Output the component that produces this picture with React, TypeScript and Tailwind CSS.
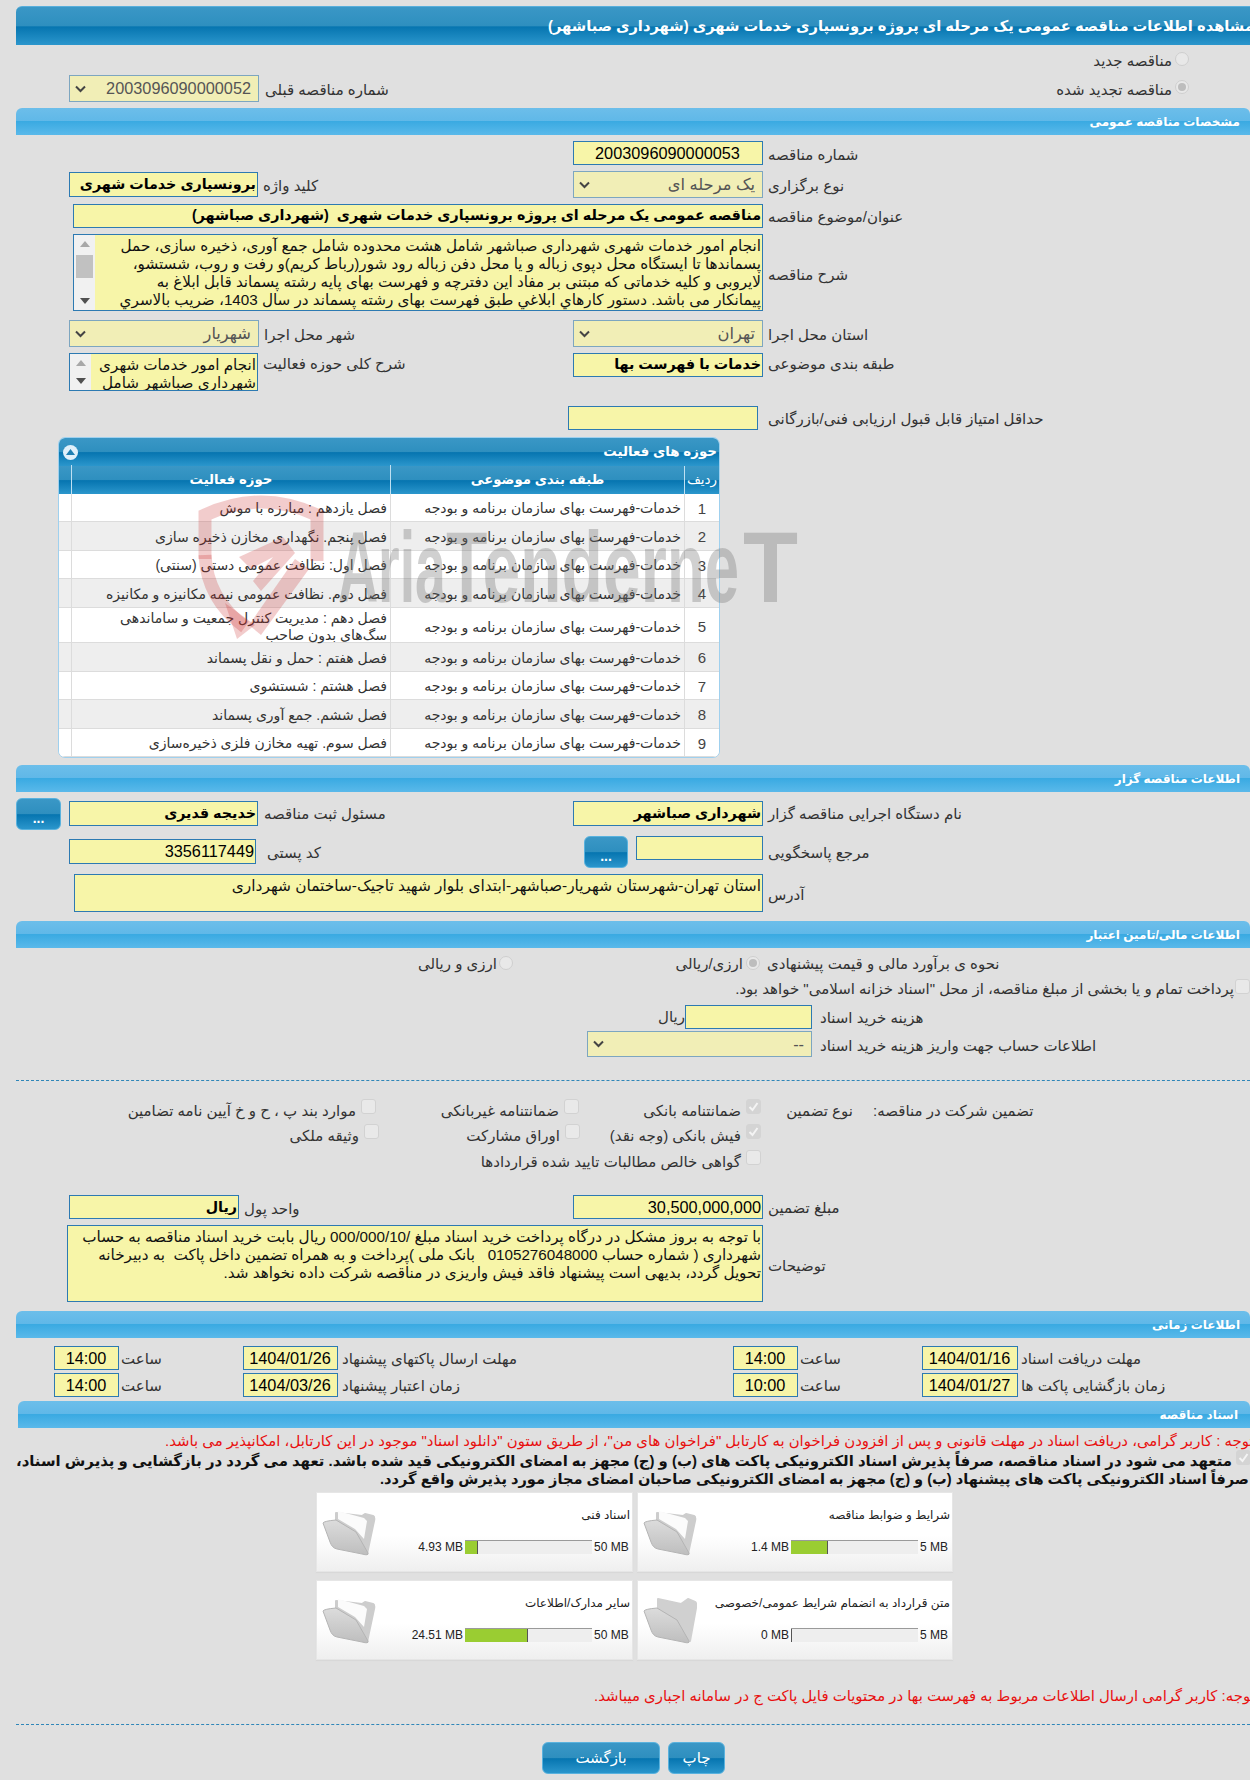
import React from "react";

const titleBg = "bg-[linear-gradient(to_bottom,#3a97c6_0%,#2e8fbf_50%,#0675b0_52%,#2b96cc_100%)]";
const sectionBg = "bg-[linear-gradient(to_bottom,#6cbeea_0%,#60b8e8_48%,#3aaae2_50%,#5ab9ea_100%)]";

function Fa({ children, className = "" }: { children: React.ReactNode; className?: string }) {
  return <span dir="rtl" className={"whitespace-pre " + className}>{children}</span>;
}

function Label({ children, className = "" }: { children: React.ReactNode; className?: string }) {
  return <div dir="rtl" className={"whitespace-nowrap text-[15px] leading-[18px] text-[#333] text-left " + className}>{children}</div>;
}

function Box({ children, className = "", align = "justify-end", bold = false }: { children?: React.ReactNode; className?: string; align?: string; bold?: boolean }) {
  return (
    <div className={"flex items-center shrink-0 bg-[#f7f5a8] border border-[#2d7ab2] pr-[1px] overflow-hidden text-black " + align + " " + className}>
      {bold ? <Fa className="font-bold text-[14.3px]">{children}</Fa> : <Fa className="text-[16.3px]">{children}</Fa>}
    </div>
  );
}

function Sel({ children, className = "" }: { children: React.ReactNode; className?: string }) {
  return (
    <div className={"flex items-center justify-between h-[27px] shrink-0 bg-[#f1eeb6] border border-[#7da6c0] pl-[5px] pr-[7px] text-[#555] " + className}>
      <svg width="11" height="8" viewBox="0 0 11 8" className="shrink-0"><path d="M1 1.5 5.5 6 10 1.5" fill="none" stroke="#444" strokeWidth="2" /></svg>
      <Fa className="text-[16.3px]">{children}</Fa>
    </div>
  );
}

function Section({ children, className = "" }: { children: React.ReactNode; className?: string }) {
  return (
    <div className={"flex items-center justify-end h-[27px] rounded-t-[6px] pr-[10px] " + sectionBg + " " + className}>
      <Fa className="text-white font-bold text-[12px] leading-[27px] pt-[2px]">{children}</Fa>
    </div>
  );
}

function Radio({ checked = false, className = "" }: { checked?: boolean; className?: string }) {
  return (
    <span className={"flex items-center justify-center w-[14px] h-[14px] rounded-full bg-[#e8e8e8] border border-[#cfcfcf] shrink-0 " + className}>
      {checked && <span className="block w-[8px] h-[8px] rounded-full bg-[#bdbdbd]" />}
    </span>
  );
}

function Check({ checked = false, className = "" }: { checked?: boolean; className?: string }) {
  return (
    <span className={"flex items-center justify-center w-[15px] h-[15px] rounded-[3px] border shrink-0 " + (checked ? "bg-[#d4d4d4] border-[#d4d4d4] " : "bg-[#e9e9e9] border-[#d2d2d2] ") + className}>
      {checked && <svg width="11" height="11" viewBox="0 0 11 11"><path d="M1.5 6 4.5 9 9.5 2" fill="none" stroke="#f4f4f4" strokeWidth="2" /></svg>}
    </span>
  );
}

function Scroll({ thumb = false, className = "" }: { thumb?: boolean; className?: string }) {
  return (
    <div className={"flex flex-col items-center justify-between shrink-0 w-[21px] bg-[#f1f1f1] py-[6px] " + className}>
      <svg width="10" height="6" viewBox="0 0 10 6"><path d="M5 0 10 6H0z" fill="#a8a8a8" /></svg>
      {thumb && <div className="w-[17px] h-[23px] bg-[#c1c1c1] -mt-[2px] mb-[10px]" />}
      <svg width="10" height="6" viewBox="0 0 10 6"><path d="M0 0H10L5 6z" fill="#505050" /></svg>
    </div>
  );
}

function Lines({ lines, className = "" }: { lines: string[]; className?: string }) {
  return (
    <div dir="rtl" className={"flex-1 overflow-hidden text-[15.2px] leading-[18px] text-[#111] pr-[1px] pt-[2px] " + className}>
      {lines.map((l, i) => (
        <div key={i} className="whitespace-pre">{l}</div>
      ))}
    </div>
  );
}

function Btn({ children, className = "", small = false }: { children: React.ReactNode; className?: string; small?: boolean }) {
  return (
    <div className={"flex items-center justify-center shrink-0 rounded-[6px] border border-[#59b2de] text-white " + titleBg + " " + className}>
      {small ? <span className="font-bold text-[14px] mt-[8px]">{children}</span> : <Fa className="text-[15px]">{children}</Fa>}
    </div>
  );
}

const rowsData: { n: string; text: React.ReactNode; h: string }[] = [
  { n: "1", text: "فصل یازدهم : مبارزه با موش", h: "h-[28px]" },
  { n: "2", text: "فصل پنجم. نگهداری مخازن ذخیره سازی", h: "h-[29px]" },
  { n: "3", text: "فصل اول: نظافت عمومی دستی (سنتی)", h: "h-[28px]" },
  { n: "4", text: "فصل دوم. نظافت عمومی نیمه مکانیزه و مکانیزه", h: "h-[29px]" },
  { n: "5", text: <>فصل دهم : مدیریت کنترل جمعیت و ساماندهی<br />سگ‌های بدون صاحب</>, h: "h-[35px]" },
  { n: "6", text: "فصل هفتم : حمل و نقل پسماند", h: "h-[29px]" },
  { n: "7", text: "فصل هشتم : شستشوی", h: "h-[28px]" },
  { n: "8", text: "فصل ششم. جمع آوری پسماند", h: "h-[29px]" },
  { n: "9", text: "فصل سوم. تهیه مخازن فلزی ذخیره‌سازی", h: "h-[28px]" },
];

const colsGrid = "grid grid-cols-[12px_319px_294px_1fr]";

function Watermark() {
  const t = { fontFamily: "Liberation Sans", fontWeight: 700, fontSize: 100, fill: "#6f6f6f", fillOpacity: 0.33, lengthAdjust: "spacingAndGlyphs" as const };
  return (
    <svg className="absolute left-[131px] top-[52px] pointer-events-none" width="680" height="190" viewBox="190 490 680 190">
      <g fill="none" stroke="#c92a2a" strokeOpacity="0.24" strokeWidth="13">
        <path d="M206 560V516Q262 490 318 516V562" />
        <path d="M206 556Q208 600 246 628" />
      </g>
      <g fill="#c92a2a" fillOpacity="0.24">
        <path d="M238 640 226 604 256 626Z" />
        <path d="M240 558 284 538 296 554 262 592 254 582 274 558 252 570Z" />
        <path d="M296 560 310 570 262 636 250 626Z" />
      </g>
      <text x="339" y="603" {...t} textLength="108">Aria</text>
      <text x="447" y="603" {...t} textLength="221">Tender</text>
      <text x="668" y="603" {...t} textLength="72">ne</text>
      <text x="744" y="603" {...t} textLength="55">T</text>
    </svg>
  );
}

function Folder({ open = true }: { open?: boolean }) {
  const id = open ? "fo" : "fc";
  return (
    <svg width="56" height="50" viewBox="8 16 56 50" className="shrink-0 mt-[14px] ml-[3px] blur-[0.4px]">
      <defs>
        <linearGradient id={id} x1="0" y1="0" x2="0" y2="1">
          <stop offset="0" stopColor="#dcdcdc" />
          <stop offset="1" stopColor="#bebebe" />
        </linearGradient>
      </defs>
      {open ? (
        <>
          <path d="M24 22 50 25 53 23 61 25Q63 26 62 30L55 63 24 34Z" fill="#cdcdcd" stroke="#cdcdcd" strokeWidth="2" strokeLinejoin="round" />
          <path d="M26 20 52 27 55 30 52 48 43 38 26 28Z" fill="#fbfbfb" />
        </>
      ) : (
        <path d="M25 20 48 25 55 20 62 23Q64 24 63 29L57 62 25 36Z" fill="#d0d0d0" stroke="#d0d0d0" strokeWidth="2" strokeLinejoin="round" />
      )}
      <path d="M11 32Q12 30 24 29L44 41 56 62Q57 65 50 63L25 58Q20 57 18 51Z" fill={"url(#" + id + ")"} stroke="#b4b4b4" strokeWidth="1" strokeLinejoin="round" />
    </svg>
  );
}

function Card({ title, size, max, fill, open = true, w, last = false }: { title: string; size: string; max: string; fill: number; open?: boolean; w: string; last?: boolean }) {
  return (
    <div className={"flex h-[80px] border border-[#e6e6e6] bg-[linear-gradient(to_bottom,#ffffff_0%,#ffffff_55%,#efefef_100%)] shadow-[0_1px_1px_#d8d8d8] " + w}>
      <Folder open={open} />
      <div className="flex-1 flex flex-col items-end pr-[2px] pt-[13px]">
        <Fa className="text-[12px] leading-[18px] text-[#222]">{title}</Fa>
        <div className="flex items-center mt-[16px] text-[12px] leading-[14px] text-[#222]">
          <span className="mr-[2px]">{size}</span>
          <div className="w-[127px] h-[14px] bg-[#eeeeee] border-t border-t-[#9a9a9a]">
            <div className="h-[13px] bg-[#9acd32] border-r border-r-[#555]" style={{ width: fill }} />
          </div>
          <span className={"ml-[2px] " + (last ? "w-[30px]" : "w-[36px]")}>{max}</span>
        </div>
      </div>
    </div>
  );
}

export default function App() {
  return (
    <div className="w-[1250px] h-[1780px] overflow-hidden bg-[#e0e0e0] [font-family:'Liberation_Sans','DejaVu_Sans',sans-serif]">
      <div className="pl-[16px] pt-[6px] w-[1250px]">
        {/* Title */}
        <div className={"flex items-center h-[39px] w-[1300px] rounded-tl-[6px] pl-[532px] border-t border-[#58aedb] " + titleBg}>
          <Fa className="font-bold text-white text-[14.7px]">مشاهده اطلاعات مناقصه عمومی یک مرحله ای پروژه برونسپاری خدمات شهری (شهرداری صباشهر)</Fa>
        </div>

        {/* Radios */}
        <div className="flex mt-[7px] h-[14px] pl-[1039px]">
          <Label className="w-[117px] text-right">مناقصه جدید</Label>
          <Radio className="ml-[3px]" />
        </div>
        <div className="flex mt-[9px] h-[27px] pl-[53px]">
          <Sel className="w-[190px] justify-between">2003096090000052</Sel>
          <Label className="ml-[6px] mt-[6px] w-[790px]">شماره مناقصه قبلی</Label>
          <Label className="w-[117px] text-right mt-[6px]">مناقصه تجدید شده</Label>
          <Radio checked className="ml-[3px] mt-[5px]" />
        </div>

        <Section className="mt-[6px]">مشخصات مناقصه عمومی</Section>

        {/* Row: number */}
        <div className="flex items-center mt-[6px] pl-[557px]">
          <Box className="w-[190px] h-[24px]" align="justify-center">2003096090000053</Box>
          <Label className="ml-[5px] mt-[3px]">شماره مناقصه</Label>
        </div>

        {/* Row: type & keyword */}
        <div className="grid grid-cols-[557px_1fr] mt-[6px]">
          <div className="flex items-center pl-[53px]">
            <Box bold className="w-[189px] h-[25px]">برونسپاری خدمات شهری</Box>
            <Label className="ml-[5px] mt-[2px]">کلید واژه</Label>
          </div>
          <div className="flex items-center">
            <Sel className="w-[190px]">یک مرحله ای</Sel>
            <Label className="ml-[5px] mt-[3px]">نوع برگزاری</Label>
          </div>
        </div>

        {/* Title row */}
        <div className="flex items-center mt-[6px] pl-[57px]">
          <Box bold className="w-[690px] h-[24px]">مناقصه عمومی یک مرحله ای پروژه برونسپاری خدمات شهری  (شهرداری صباشهر)</Box>
          <Label className="ml-[5px] mt-[2px]">عنوان/موضوع مناقصه</Label>
        </div>

        {/* Description */}
        <div className="flex items-center mt-[6px] pl-[57px]">
          <div className="flex w-[690px] h-[77px] shrink-0 bg-[#f7f5a8] border border-[#2d7ab2]">
            <Scroll thumb />
            <Lines
              lines={[
                "انجام امور خدمات شهری شهرداری صباشهر شامل هشت محدوده شامل جمع آوری، ذخیره سازی، حمل",
                "پسماندها تا ایستگاه محل دپوی زباله و یا محل دفن زباله رود شور(رباط کریم)و رفت و روب، شستشو،",
                "لایروبی و کلیه خدماتی که مبتنی بر مفاد این دفترچه و فهرست بهای پایه رشته پسماند قابل ابلاغ به",
                "پیمانکار می باشد. دستور کارهاي ابلاغي طبق فهرست بهای رشته پسماند در سال 1403، ضریب بالاسري",
              ]}
            />
          </div>
          <Label className="ml-[5px] mt-[4px]">شرح مناقصه</Label>
        </div>

        {/* Province/city */}
        <div className="grid grid-cols-[557px_1fr] mt-[9px]">
          <div className="flex items-center pl-[53px]">
            <Sel className="w-[190px]">شهریار</Sel>
            <Label className="ml-[5px] mt-[3px]">شهر محل اجرا</Label>
          </div>
          <div className="flex items-center">
            <Sel className="w-[190px]">تهران</Sel>
            <Label className="ml-[5px] mt-[2px]">استان محل اجرا</Label>
          </div>
        </div>

        {/* Activity / category */}
        <div className="grid grid-cols-[557px_1fr] mt-[6px]">
          <div className="flex items-start pl-[53px]">
            <div className="flex w-[189px] h-[38px] shrink-0 bg-[#f7f5a8] border border-[#2d7ab2]">
              <Scroll />
              <Lines className="overflow-hidden" lines={["انجام امور خدمات شهری", "شهرداری صباشهر شامل"]} />
            </div>
            <Label className="ml-[5px] mt-[2px]">شرح کلی حوزه فعالیت</Label>
          </div>
          <div className="flex items-start">
            <Box bold className="w-[190px] h-[24px]">خدمات با فهرست بها</Box>
            <Label className="ml-[5px] mt-[2px]">طبقه بندی موضوعی</Label>
          </div>
        </div>

        {/* Score */}
        <div className="flex items-center mt-[15px] pl-[552px]">
          <Box className="w-[190px] h-[24px]" />
          <Label className="ml-[10px] mt-[2px]">حداقل امتیاز قابل قبول ارزیابی فنی/بازرگانی</Label>
        </div>

        {/* Panel */}
        <div className="relative mt-[7px] ml-[42px] w-[662px] h-[321px]">
          <div className="w-full h-full rounded-[7px] border border-[#9fd0ee] bg-white overflow-hidden">
            <div className={titleBg}>
              <div className="flex items-center justify-between h-[28px] pl-[4px] pr-[2px]">
                <span className="flex items-center justify-center w-[15px] h-[15px] rounded-full bg-[#dff0fa]">
                  <svg width="9" height="6" viewBox="0 0 9 6"><path d="M4.5 0 9 6H0z" fill="#1f7fb2" /></svg>
                </span>
                <Fa className="text-white font-bold text-[13.4px]">حوزه های فعالیت</Fa>
              </div>
            </div>
            <div className={colsGrid + " h-[28px] text-white font-bold text-[13.3px] " + titleBg}>
              <div />
              <div dir="rtl" className="flex items-center justify-center border-l border-[#bfe0f2] -mt-[1px]">حوزه فعالیت</div>
              <div dir="rtl" className="flex items-center justify-center border-l border-[#bfe0f2] -mt-[1px]">طبقه بندی موضوعی</div>
              <div dir="rtl" className="flex items-center justify-center border-l border-[#bfe0f2] font-normal text-[13.5px]">ردیف</div>
            </div>
            {rowsData.map((r, i) => (
              <div key={r.n} className={colsGrid + " border-b border-[#dcdcdc] text-[14px] leading-[17px] text-[#333] " + r.h + " " + (i % 2 ? "bg-[#eeeeee]" : "bg-white")}>
                <div />
                <div dir="rtl" className="flex items-center pr-[3px] pt-[2px] border-l border-[#dcdcdc]"><div>{r.text}</div></div>
                <div dir="rtl" className="flex items-center pr-[3px] pt-[2px] border-l border-[#dcdcdc]">خدمات-فهرست بهای سازمان برنامه و بودجه</div>
                <div className="flex items-center justify-center pt-[1px] border-l border-[#dcdcdc] text-[15px] text-[#444]">{r.n}</div>
              </div>
            ))}
          </div>
          <Watermark />
        </div>

        <Section className="mt-[7px]">اطلاعات مناقصه گزار</Section>

        {/* Organizer */}
        <div className="grid grid-cols-[557px_1fr] mt-[6px] h-[32px]">
          <div className="flex items-start">
            <Btn small className="w-[45px] h-[32px]">...</Btn>
            <Box bold className="w-[189px] h-[25px] mt-[3px] ml-[8px]">خدیجه قدیری</Box>
            <Label className="ml-[6px] mt-[7px]">مسئول ثبت مناقصه</Label>
          </div>
          <div className="flex items-start">
            <Box bold className="w-[190px] h-[25px] mt-[3px]">شهرداری صباشهر</Box>
            <Label className="ml-[5px] mt-[7px]">نام دستگاه اجرایی مناقصه گزار</Label>
          </div>
        </div>

        <div className="grid grid-cols-[557px_1fr] mt-[6px] h-[32px]">
          <div className="flex items-start pl-[53px]">
            <Box className="w-[187px] h-[25px] mt-[3px]">3356117449</Box>
            <Label className="ml-[11px] mt-[8px]">کد پستی</Label>
          </div>
          <div className="flex items-start">
            <Btn small className="w-[44px] h-[32px] ml-[11px]">...</Btn>
            <Box className="w-[127px] h-[24px] ml-[8px]" />
            <Label className="ml-[5px] mt-[8px]">مرجع پاسخگویی</Label>
          </div>
        </div>

        <div className="flex items-center mt-[6px] pl-[58px]">
          <div className="w-[689px] h-[38px] shrink-0 flex bg-[#f7f5a8] border border-[#2d7ab2]">
            <Lines className="!text-[15.4px]" lines={["استان تهران-شهرستان شهریار-صباشهر-ابتدای بلوار شهید تاجیک-ساختمان شهرداری"]} />
          </div>
          <Label className="ml-[5px] mt-[4px]">آدرس</Label>
        </div>

        <Section className="mt-[9px]">اطلاعات مالی/تامین اعتبار</Section>

        {/* Finance */}
        <div className="flex items-center mt-[7px] h-[18px] pl-[404px]">
          <Label className="w-[77px] text-right">ارزی و ریالی</Label>
          <Radio className="ml-[2px] -mt-[3px]" />
          <div className="w-[164px]" />
          <Label className="w-[66px] text-right">ارزی/ریالی</Label>
          <Radio checked className="ml-[3px] -mt-[3px]" />
          <Label className="ml-[7px]">نحوه ی برآورد مالی و قیمت پیشنهادی</Label>
        </div>

        <div className="flex items-center mt-[5px] h-[22px] pl-[709px]">
          <Label className="w-[512px] text-right">پرداخت تمام و یا بخشی از مبلغ مناقصه، از محل "اسناد خزانه اسلامی" خواهد بود.</Label>
          <Check className="ml-[1px] -mt-[6px]" />
        </div>

        <div className="flex items-center mt-[5px] pl-[646px]">
          <Label className="w-[23px] text-right">ریال</Label>
          <Box className="w-[127px] h-[24px]" />
          <Label className="ml-[8px] mt-[2px]">هزینه خرید اسناد</Label>
        </div>

        <div className="flex items-center mt-[2px] pl-[571px]">
          <Sel className="w-[225px] !h-[26px]">--</Sel>
          <Label className="ml-[8px] mt-[3px]">اطلاعات حساب جهت واریز هزینه خرید اسناد</Label>
        </div>

        <div className="mt-[23px] border-t border-dashed border-[#2f86b8]" />

        {/* Guarantee */}
        <div className="flex mt-[18px] h-[15px] pl-[114px]">
          <Label className="w-[226px] text-right mt-[3px]">موارد بند پ ، ح و خ آیین نامه تضامین</Label>
          <Check className="ml-[5px]" />
          <div className="w-[62px]" />
          <Label className="w-[121px] text-right mt-[3px]">ضمانتنامه غیربانکی</Label>
          <Check className="ml-[5px]" />
          <div className="w-[62px]" />
          <Label className="w-[100px] text-right mt-[3px]">ضمانتنامه بانکی</Label>
          <Check checked className="ml-[5px]" />
          <Label className="ml-[26px] w-[66px] text-center mt-[3px]">نوع تضمین</Label>
          <Label className="ml-[20px] mt-[3px]">تضمین شرکت در مناقصه:</Label>
        </div>
        <div className="flex mt-[10px] h-[16px] pl-[270px]">
          <Label className="w-[73px] text-right mt-[3px]">وثیقه ملکی</Label>
          <Check className="ml-[5px]" />
          <div className="w-[90px]" />
          <Label className="w-[91px] text-right mt-[3px]">اوراق مشارکت</Label>
          <Check className="ml-[5px]" />
          <div className="w-[20px]" />
          <Label className="w-[141px] text-right mt-[3px]">فیش بانکی (وجه نقد)</Label>
          <Check checked className="ml-[5px]" />
        </div>
        <div className="flex mt-[10px] h-[15px] pl-[465px]">
          <Label className="w-[260px] text-right mt-[3px]">گواهی خالص مطالبات تایید شده قراردادها</Label>
          <Check className="ml-[5px]" />
        </div>

        {/* Amount */}
        <div className="grid grid-cols-[557px_1fr] mt-[30px]">
          <div className="flex items-center pl-[53px]">
            <Box bold className="w-[170px] h-[24px] pt-[1px]">ریال</Box>
            <Label className="ml-[5px] mt-[3px]">واحد پول</Label>
          </div>
          <div className="flex items-center">
            <Box className="w-[190px] h-[24px] pt-[1px]">30,500,000,000</Box>
            <Label className="ml-[5px] mt-[2px]">مبلغ تضمین</Label>
          </div>
        </div>

        <div className="flex items-center mt-[6px] pl-[51px]">
          <div className="w-[696px] h-[77px] shrink-0 flex bg-[#f7f5a8] border border-[#2d7ab2]">
            <Lines
              lines={[
                "با توجه به بروز مشکل در درگاه پرداخت خرید اسناد مبلغ /000/000/10 ریال بابت خرید اسناد مناقصه به حساب",
                "شهرداری ( شماره حساب 0105276048000   بانک ملی )پرداخت و به همراه تضمین داخل پاکت  به دبیرخانه",
                "تحویل گردد، بدیهی است پیشنهاد فاقد فیش واریزی در مناقصه شرکت داده نخواهد شد.",
              ]}
            />
          </div>
          <Label className="ml-[5px] mt-[4px]">توضیحات</Label>
        </div>

        <Section className="mt-[9px]">اطلاعات زمانی</Section>

        {/* Times */}
        {[
          ["1404/01/26", "مهلت ارسال پاکتهای پیشنهاد", "14:00", "1404/01/16", "مهلت دریافت اسناد", "14:00"],
          ["1404/03/26", "زمان اعتبار پیشنهاد", "14:00", "1404/01/27", "زمان بازگشایی پاکت ها", "10:00"],
        ].map((r, i) => (
          <div key={i} className={"flex items-center pl-[38px] " + (i ? "mt-[3px]" : "mt-[8px]")}>
            <Box className="w-[65px] h-[24px]" align="justify-center">{r[2]}</Box>
            <Label className="ml-[2px] w-[122px] mt-[2px]">ساعت</Label>
            <Box className="w-[95px] h-[24px]" align="justify-center">{r[0]}</Box>
            <Label className="ml-[4px] w-[391px] mt-[2px]">{r[1]}</Label>
            <Box className="w-[65px] h-[24px]" align="justify-center">{r[5]}</Box>
            <Label className="ml-[2px] w-[122px] mt-[2px]">ساعت</Label>
            <Box className="w-[96px] h-[24px]" align="justify-center">{r[3]}</Box>
            <Label className="ml-[3px] mt-[2px]">{r[4]}</Label>
          </div>
        ))}

        <Section className="mt-[4px] ml-[2px] !pr-[12px]">اسناد مناقصه</Section>

        {/* Notes */}
        <div className="pl-[149px] mt-[3px] h-[20px] w-[1400px]">
          <Fa className="inline-block align-top text-[14.9px] leading-[20px] text-[#e81010]">توجه : کاربر گرامی، دریافت اسناد در مهلت قانونی و پس از افزودن فراخوان به کارتابل "فراخوان های من"، از طریق ستون "دانلود اسناد" موجود در این کارتابل، امکانپذیر می باشد.</Fa>
        </div>
        <div className="flex justify-end mt-[1px] h-[18px]">
          <Fa className="inline-block align-top font-bold text-[14.9px] leading-[18px] text-[#111]">متعهد می شود در اسناد مناقصه، صرفاً پذیرش اسناد الکترونیکی پاکت های (ب) و (ج) مجهز به امضای الکترونیکی قید شده باشد. تعهد می گردد در بازگشایی و پذیرش اسناد،</Fa>
          <Check checked className="ml-[4px] -mt-[2px] -mr-[1px]" />
        </div>
        <div className="pl-[364px] h-[18px] w-[1400px]">
          <Fa className="inline-block align-top font-bold text-[14.6px] leading-[18px] text-[#111]">صرفاً اسناد الکترونیکی پاکت های پیشنهاد (ب) و (ج) مجهز به امضای الکترونیکی صاحبان امضای مجاز مورد پذیرش واقع گردد.</Fa>
        </div>

        {/* Cards */}
        <div className="flex gap-[4px] mt-[4px] ml-[300px]">
          <Card w="w-[317px]" title="اسناد فنی" size="4.93 MB" max="50 MB" fill={13} />
          <Card w="w-[316px]" title="شرایط و ضوابط مناقصه" size="1.4 MB" max="5 MB" fill={37} last />
        </div>
        <div className="flex gap-[4px] mt-[8px] ml-[300px]">
          <Card w="w-[317px]" title="سایر مدارک/اطلاعات" size="24.51 MB" max="50 MB" fill={63} />
          <Card w="w-[316px]" title="متن قرارداد به انضمام شرایط عمومی/خصوصی" size="0 MB" max="5 MB" fill={1} open={false} last />
        </div>

        <div className="pl-[578px] mt-[27px] h-[18px] w-[1400px]">
          <Fa className="inline-block align-top text-[14.9px] leading-[18px] text-[#e81010]">توجه: کاربر گرامی ارسال اطلاعات مربوط به فهرست بها در محتویات فایل پاکت ج در سامانه اجباری میباشد.</Fa>
        </div>

        <div className="mt-[19px] border-t border-dashed border-[#2f86b8]" />

        <div className="flex gap-[8px] mt-[17px] ml-[526px]">
          <Btn className="w-[118px] h-[32px]">بازگشت</Btn>
          <Btn className="w-[57px] h-[32px]">چاپ</Btn>
        </div>
      </div>
    </div>
  );
}
